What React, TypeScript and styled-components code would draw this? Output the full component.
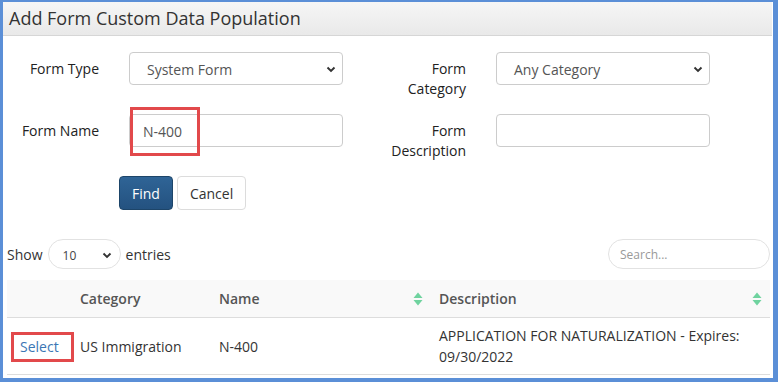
import React from "react";
import styled, { createGlobalStyle } from "styled-components";

const GlobalStyle = createGlobalStyle`
  html, body {
    margin: 0;
    padding: 0;
    background: #ffffff;
  }
  body {
    font-family: "Open Sans", "Liberation Sans", sans-serif;
    font-size: 14px;
    color: #333;
  }
  * {
    box-sizing: border-box;
  }
`;

const Frame = styled.div`
  width: 778px;
  height: 382px;
  border-style: solid;
  border-color: #5b8fd7;
  border-width: 2px 5px 4px 3px;
  background: #fff;
  overflow: hidden;
  display: flex;
  flex-direction: column;
`;

const Header = styled.div`
  height: 34px;
  flex: none;
  display: flex;
  align-items: center;
  padding: 0 6px 2px;
  margin-right: 1px;
  background: linear-gradient(#f6f6f6, #e9e9e9);
  border-bottom: 1px solid #d6d6d6;
`;

const Title = styled.h1`
  margin: 0;
  font-size: 18px;
  font-weight: 400;
  color: #333;
`;

const FormGrid = styled.div`
  display: grid;
  grid-template-columns: 96px 214px 93px 214px;
  column-gap: 30px;
  row-gap: 15px;
  padding-top: 16px;
`;

const Label = styled.div`
  text-align: right;
  padding-top: 7px;
  font-weight: 500;
  line-height: 20px;
  color: #222;
  height: 47px;
`;

const FieldCell = styled.div`
  position: relative;
`;

const SelectBox = styled.div`
  height: 33px;
  display: flex;
  align-items: center;
  justify-content: space-between;
  padding: 1px 6px 0 17px;
  border: 1px solid #ccc;
  border-radius: 4px;
  color: #555;
  background: #fff;
`;

const TextBox = styled.div`
  height: 33px;
  display: flex;
  align-items: center;
  padding: 1px 13px 0;
  border: 1px solid #ccc;
  border-radius: 4px;
  color: #555;
  background: #fff;
`;

const Highlight = styled.div<{ $top: number; $left: number; $w: number; $h: number }>`
  position: absolute;
  top: ${(p) => p.$top}px;
  left: ${(p) => p.$left}px;
  width: ${(p) => p.$w}px;
  height: ${(p) => p.$h}px;
  border: 3px solid #e2494b;
  pointer-events: none;
`;

const ButtonRow = styled.div`
  display: flex;
  gap: 4px;
  padding-left: 116px;
  margin-top: 15px;
`;

const Button = styled.button<{ $primary?: boolean }>`
  height: 34px;
  padding: 0 12px;
  font-family: inherit;
  font-size: 14px;
  border-radius: 4px;
  border: 1px solid ${(p) => (p.$primary ? "#1d4569" : "#dcdcdc")};
  background: ${(p) => (p.$primary ? "linear-gradient(#2f6496, #245280)" : "#fff")};
  color: ${(p) => (p.$primary ? "#fff" : "#333")};
`;

const ToolBar = styled.div`
  display: flex;
  align-items: center;
  justify-content: space-between;
  margin-top: 29px;
  padding: 0 3px 0 4px;
`;

const Length = styled.div`
  display: flex;
  align-items: center;
  gap: 5px;
  color: #333;
`;

const PillSelect = styled.div`
  width: 73px;
  height: 30px;
  display: flex;
  align-items: center;
  justify-content: space-between;
  padding: 2px 8px 0 14px;
  border: 1px solid #e2e2e2;
  border-radius: 15px;
  font-size: 12px;
  color: #444;
`;

const SearchBox = styled.div`
  width: 162px;
  height: 30px;
  display: flex;
  align-items: center;
  padding: 0 11px;
  border: 1px solid #e2e2e2;
  border-radius: 15px;
  font-size: 12px;
  color: #999;
`;

const Table = styled.div`
  margin: 11px 3px 0 4px;
  display: grid;
  grid-template-columns: 65px 139px 220px 1fr;
`;

const HeadCell = styled.div`
  height: 38px;
  display: flex;
  align-items: center;
  justify-content: space-between;
  padding: 0 8px;
  background: #f9f9f9;
  border-bottom: 1px solid #ddd;
  font-weight: 600;
  color: #555;
`;

const Cell = styled.div`
  position: relative;
  padding: 7px 8px;
  line-height: 21px;
  min-height: 57px;
  display: flex;
  align-items: center;
  border-bottom: 1px solid #ddd;
  color: #333;
`;

const Link = styled.a`
  color: #3b76b4;
  text-decoration: none;
  padding-left: 5px;
`;

const Chevron = () => (
  <svg width="10" height="7" viewBox="0 0 10 7">
    <path d="M1.5 1.5 L5 5 L8.5 1.5" fill="none" stroke="#333" strokeWidth="1.9" />
  </svg>
);

const SortIcon = () => (
  <svg width="10" height="14" viewBox="0 0 10 14">
    <path d="M5 0.5 L9.5 6 H0.5 Z" fill="#6fd39f" />
    <path d="M5 13.5 L9.5 8 H0.5 Z" fill="#6fd39f" />
  </svg>
);

export default function App() {
  return (
    <>
      <GlobalStyle />
      <Frame>
        <Header>
          <Title>Add Form Custom Data Population</Title>
        </Header>
        <FormGrid>
          <Label>Form Type</Label>
          <FieldCell>
            <SelectBox>
              System Form
              <Chevron />
            </SelectBox>
          </FieldCell>
          <Label>
            Form
            <br />
            Category
          </Label>
          <FieldCell>
            <SelectBox>
              Any Category
              <Chevron />
            </SelectBox>
          </FieldCell>
          <Label>Form Name</Label>
          <FieldCell>
            <TextBox>N-400</TextBox>
            <Highlight $top={-7} $left={1} $w={70} $h={49} />
          </FieldCell>
          <Label>
            Form
            <br />
            Description
          </Label>
          <FieldCell>
            <TextBox />
          </FieldCell>
        </FormGrid>
        <ButtonRow>
          <Button $primary>Find</Button>
          <Button>Cancel</Button>
        </ButtonRow>
        <ToolBar>
          <Length>
            Show
            <PillSelect>
              10
              <Chevron />
            </PillSelect>
            entries
          </Length>
          <SearchBox>Search...</SearchBox>
        </ToolBar>
        <Table>
          <HeadCell />
          <HeadCell>Category</HeadCell>
          <HeadCell>
            Name
            <SortIcon />
          </HeadCell>
          <HeadCell>
            Description
            <SortIcon />
          </HeadCell>
          <Cell>
            <Link>Select</Link>
            <Highlight $top={14} $left={4} $w={63} $h={30} />
          </Cell>
          <Cell>US Immigration</Cell>
          <Cell>N-400</Cell>
          <Cell>APPLICATION FOR NATURALIZATION - Expires: 09/30/2022</Cell>
        </Table>
      </Frame>
    </>
  );
}
